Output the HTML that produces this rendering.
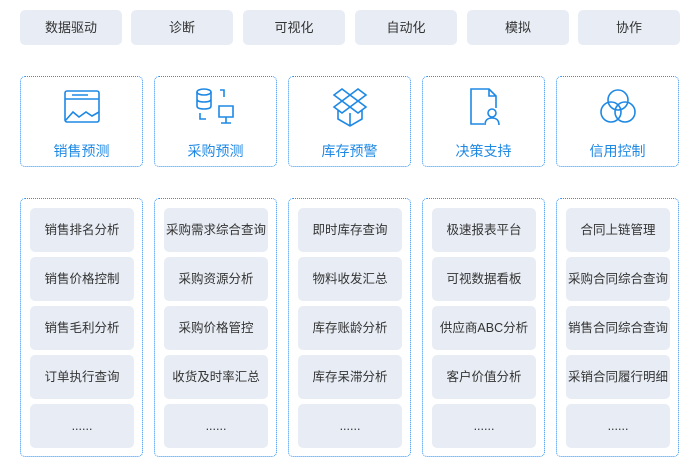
<!DOCTYPE html>
<html><head><meta charset="utf-8"><style>
*{margin:0;padding:0;box-sizing:border-box}
body{width:700px;height:470px;background:#fff;position:relative;font-family:"Liberation Sans","Noto Sans CJK SC",sans-serif;overflow:hidden}
.tb{position:absolute;top:10px;width:102px;height:35px;background:#e8edf5;border-radius:5px;font-size:13px;color:#333;text-align:center;line-height:35px}
.card{position:absolute;top:76px;width:123px;height:91px;border:1px dotted #2b8ff0;border-radius:5px;text-align:center}
.card svg{position:absolute;left:43px;top:11px}
.card span{position:absolute;left:0;right:0;top:64px;font-size:14px;color:#1e88e5;line-height:20px}
.col{position:absolute;top:198px;width:123px;height:259px;border:1px dotted #2b8ff0;border-radius:5px}
.it{position:absolute;left:9px;width:104px;height:44px;background:#e8edf5;border-radius:5px;font-size:12.5px;color:#333;text-align:center;line-height:44px;white-space:nowrap}
</style></head><body>
<div class="tb" style="left:20px">数据驱动</div>
<div class="tb" style="left:131px">诊断</div>
<div class="tb" style="left:243px">可视化</div>
<div class="tb" style="left:355px">自动化</div>
<div class="tb" style="left:467px">模拟</div>
<div class="tb" style="left:578px">协作</div>

<div class="card" style="left:20px"><svg width="36" height="36" viewBox="0 0 36 36" fill="none" stroke="#1e88e5" stroke-width="1.6"><rect x="2" y="3" width="34" height="31" rx="2" transform="translate(-1,0)"/><path d="M1 11h34M8 7h16M1 33l8-9 6 5 7-5 6 4 7-4"/></svg><span>销售预测</span></div>
<div class="card" style="left:154px"><svg width="40" height="40" viewBox="0 0 40 40" fill="none" stroke="#1e88e5" stroke-width="1.6" style="left:40px;top:10px"><ellipse cx="9" cy="5" rx="7" ry="3"/><path d="M2 5v14c0 2 3 3 7 3s7-1 7-3V5M2 12c0 2 3 3 7 3s7-1 7-3M25 3h4v7M5 26v6h6M24 19h14v11H24zM31 30v6M26 36h10"/></svg><span>采购预测</span></div>
<div class="card" style="left:288px"><svg width="38" height="40" viewBox="0 0 38 40" fill="none" stroke="#1e88e5" stroke-width="1.6" style="left:42px;top:10px"><path d="M3 8l8-6 8 6-8 6zM19 8l8-6 8 6-8 6zM3 20l8-6 8 6 8-6 8 6-8 6-8-6-8 6zM7 23v9l12 7 12-7v-9M19 26v13"/></svg><span>库存预警</span></div>
<div class="card" style="left:422px"><svg width="36" height="40" viewBox="0 0 36 40" fill="none" stroke="#1e88e5" stroke-width="1.6" style="left:45px;top:10px"><path d="M16 37H3V2h18l7 7v12M21 2v7h7"/><circle cx="24" cy="26" r="4"/><path d="M17 38c0-5 3-7 7-7s7 2 7 7"/></svg><span>决策支持</span></div>
<div class="card" style="left:556px"><svg width="40" height="40" viewBox="0 0 40 40" fill="none" stroke="#1e88e5" stroke-width="1.6" style="left:41px;top:10px"><circle cx="20" cy="13" r="10"/><circle cx="13" cy="25" r="10"/><circle cx="27" cy="25" r="10"/></svg><span>信用控制</span></div>

<div class="col" style="left:20px"><div class="it" style="top:9px">销售排名分析</div><div class="it" style="top:58px">销售价格控制</div><div class="it" style="top:107px">销售毛利分析</div><div class="it" style="top:156px">订单执行查询</div><div class="it" style="top:205px">......</div></div>
<div class="col" style="left:154px"><div class="it" style="top:9px">采购需求综合查询</div><div class="it" style="top:58px">采购资源分析</div><div class="it" style="top:107px">采购价格管控</div><div class="it" style="top:156px">收货及时率汇总</div><div class="it" style="top:205px">......</div></div>
<div class="col" style="left:288px"><div class="it" style="top:9px">即时库存查询</div><div class="it" style="top:58px">物料收发汇总</div><div class="it" style="top:107px">库存账龄分析</div><div class="it" style="top:156px">库存呆滞分析</div><div class="it" style="top:205px">......</div></div>
<div class="col" style="left:422px"><div class="it" style="top:9px">极速报表平台</div><div class="it" style="top:58px">可视数据看板</div><div class="it" style="top:107px">供应商ABC分析</div><div class="it" style="top:156px">客户价值分析</div><div class="it" style="top:205px">......</div></div>
<div class="col" style="left:556px"><div class="it" style="top:9px">合同上链管理</div><div class="it" style="top:58px">采购合同综合查询</div><div class="it" style="top:107px">销售合同综合查询</div><div class="it" style="top:156px">采销合同履行明细</div><div class="it" style="top:205px">......</div></div>
</body></html>
